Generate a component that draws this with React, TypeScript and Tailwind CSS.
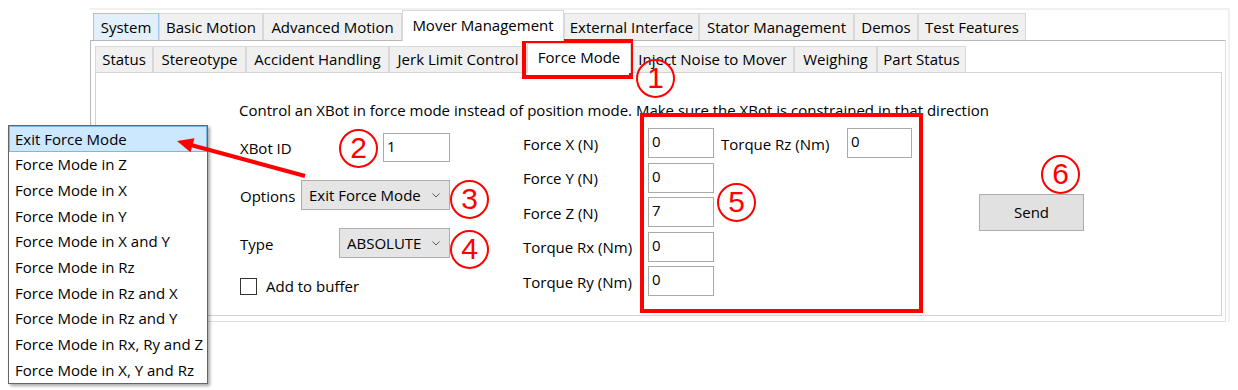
import React from 'react';

const outerTabs: { label: string; w: number; state?: 'hover' | 'sel' }[] = [
  { label: 'System', w: 66, state: 'hover' },
  { label: 'Basic Motion', w: 104 },
  { label: 'Advanced Motion', w: 139 },
  { label: 'Mover Management', w: 162, state: 'sel' },
  { label: 'External Interface', w: 135 },
  { label: 'Stator Management', w: 155 },
  { label: 'Demos', w: 64 },
  { label: 'Test Features', w: 108 },
];

const innerTabs: { label: string; w: number; sel?: boolean }[] = [
  { label: 'Status', w: 58 },
  { label: 'Stereotype', w: 93 },
  { label: 'Accident Handling', w: 143 },
  { label: 'Jerk Limit Control', w: 138 },
  { label: 'Force Mode', w: 104, sel: true },
  { label: 'Inject Noise to Mover', w: 163 },
  { label: 'Weighing', w: 83 },
  { label: 'Part Status', w: 89 },
];

const modes = [
  'Exit Force Mode',
  'Force Mode in Z',
  'Force Mode in X',
  'Force Mode in Y',
  'Force Mode in X and Y',
  'Force Mode in Rz',
  'Force Mode in Rz and X',
  'Force Mode in Rz and Y',
  'Force Mode in Rx, Ry and Z',
  'Force Mode in X, Y and Rz',
];

const forces = [
  { label: 'Force X (N)', value: '0' },
  { label: 'Force Y (N)', value: '0' },
  { label: 'Force Z (N)', value: '7' },
  { label: 'Torque Rx (Nm)', value: '0' },
  { label: 'Torque Ry (Nm)', value: '0' },
];

const Chevron = () => (
  <svg width="8" height="5" viewBox="0 0 8 5" className="shrink-0">
    <path d="M0.5 0.5 L4 4 L7.5 0.5" fill="none" stroke="#606060" strokeWidth="1" />
  </svg>
);

const TextBox = ({ value, w, h = 30 }: { value: string; w: number; h?: number }) => (
  <div
    className="bg-white border border-[#a9a9a9] pl-[3px] leading-[24px] shrink-0"
    style={{ width: w, height: h }}
  >
    {value}
  </div>
);

const Combo = ({ value, w }: { value: string; w: number }) => (
  <div
    className="h-[30px] bg-[#e5e5e5] border border-[#adadad] flex items-center justify-between pl-[7px] pr-[9px]"
    style={{ width: w }}
  >
    <span>{value}</span>
    <Chevron />
  </div>
);

const Circled = ({ n, className }: { n: number; className: string }) => (
  <div
    className={`absolute w-[39px] h-[39px] rounded-full border-2 border-[#ff0000] text-[#ff0000] flex items-center justify-center text-[30px] leading-none font-['Liberation_Sans',sans-serif] ${className}`}
  >
    <span className="-mt-[1px]">{n}</span>
  </div>
);

export default function App() {
  return (
    <div className="relative w-[1238px] h-[390px] bg-white overflow-hidden text-[15px] text-black font-['Open_Sans','Noto_Sans',sans-serif]">
      <div className="pt-[8px] pl-[90px]">
        <div className="w-[1140px] border-t-2 border-r-2 border-[#f0f0f0]">
          {/* outer tab strip */}
          <div className="h-[30px] flex items-end pl-[3px]">
            {outerTabs.map((t) => (
              <div
                key={t.label}
                style={{ width: t.w }}
                className={
                  t.state === 'sel'
                    ? 'relative z-10 -mb-px h-[31px] bg-white border-x border-t border-[#d9d9d9] flex items-center justify-center pb-[2px]'
                    : t.state === 'hover'
                    ? 'h-[27px] bg-[#e3effa] border-x border-t border-[#9dc8ef] flex items-center justify-center'
                    : 'h-[27px] bg-[#f0f0f0] border-x border-t border-[#d9d9d9] flex items-center justify-center'
                }
              >
                {t.label}
              </div>
            ))}
          </div>

          {/* outer panel */}
          <div className="w-[1136px] h-[282px] border-l border-t border-[#b8b8b8] border-r border-b border-r-[#dedede] border-b-[#dedede] pl-[4px]">
            {/* inner tab strip */}
            <div className="h-[31px] flex items-end">
              {innerTabs.map((t) => (
                <div
                  key={t.label}
                  style={{ width: t.w }}
                  className={
                    t.sel
                      ? 'relative z-10 -mb-px h-[30px] bg-white border-x border-t border-[#d9d9d9] flex items-center justify-center pb-[2px]'
                      : 'h-[26px] bg-[#f0f0f0] border-x border-t border-[#d9d9d9] flex items-center justify-center'
                  }
                >
                  {t.label}
                </div>
              ))}
            </div>

            {/* inner panel */}
            <div className="w-[1127px] h-[244px] border border-[#d3d3d3] bg-white pl-[143px] pt-[27px]">
              <div className="leading-[20px] whitespace-nowrap">
                Control an XBot in force mode instead of position mode. Make sure the XBot is constrained in that direction
              </div>

              <div className="flex items-start mt-[8px] pl-px">
                {/* left column */}
                <div className="w-[210px] mt-[5px] flex flex-col gap-[18px]">
                  <div className="flex items-center justify-between h-[29px]">
                    <span className="mt-[2px]">XBot ID</span>
                    <TextBox value="1" w={67} h={29} />
                  </div>
                  <div className="flex items-center justify-between">
                    <span className="mt-[3px]">Options</span>
                    <Combo value="Exit Force Mode" w={149} />
                  </div>
                  <div className="flex items-center justify-between">
                    <span className="mt-[2px]">Type</span>
                    <Combo value="ABSOLUTE" w={111} />
                  </div>
                  <div className="flex items-center gap-[9px] -mt-[1px]">
                    <div className="w-[17px] h-[17px] border border-[#333333] bg-white" />
                    <span>Add to buffer</span>
                  </div>
                </div>

                {/* force / torque grid */}
                <div className="ml-[73px] flex flex-col gap-[4.5px]">
                  {forces.map((f) => (
                    <div key={f.label} className="flex items-center h-[30px]">
                      <span className="w-[125px] mt-[2px]">{f.label}</span>
                      <TextBox value={f.value} w={66} />
                    </div>
                  ))}
                </div>
                <div className="ml-[7px] flex items-center h-[30px]">
                  <span className="w-[126px] mt-[2px]">Torque Rz (Nm)</span>
                  <TextBox value="0" w={65} />
                </div>

                <button className="ml-[67px] mt-[66px] w-[105px] h-[37px] bg-[#e1e1e1] border border-[#adadad] flex items-center justify-center">
                  Send
                </button>
              </div>
            </div>
          </div>
        </div>
      </div>

      {/* open dropdown list */}
      <div className="absolute left-[8px] top-[125px] w-[200px] bg-white border border-[#646464] shadow-[2px_2px_3px_rgba(0,0,0,0.35)] flex flex-col">
        {modes.map((m, i) => (
          <div
            key={m}
            className={
              i === 0
                ? 'h-[25.7px] flex items-center pl-[5px] bg-[#cce8ff] border border-[#7db7e7]'
                : 'h-[25.7px] flex items-center pl-[6px]'
            }
          >
            {m}
          </div>
        ))}
      </div>

      {/* annotations */}
      <div className="absolute left-[522px] top-[39px] w-[111px] h-[40px] border-4 border-[#ff0000]" />
      <div className="absolute left-[640px] top-[113px] w-[283px] h-[200px] border-4 border-[#ff0000]" />
      <Circled n={1} className="left-[636px] top-[59px]" />
      <Circled n={2} className="left-[339px] top-[129px]" />
      <Circled n={3} className="left-[450px] top-[180px]" />
      <Circled n={4} className="left-[450px] top-[230px]" />
      <Circled n={5} className="left-[717px] top-[183px]" />
      <Circled n={6} className="left-[1041px] top-[155px]" />

      <svg className="absolute left-0 top-0 pointer-events-none" width="1238" height="390">
        <line x1="305" y1="176" x2="191" y2="145" stroke="#ff0000" strokeWidth="4" />
        <polygon points="177,141 194.5,138.2 190.5,152.3" fill="#ff0000" />
      </svg>
    </div>
  );
}
